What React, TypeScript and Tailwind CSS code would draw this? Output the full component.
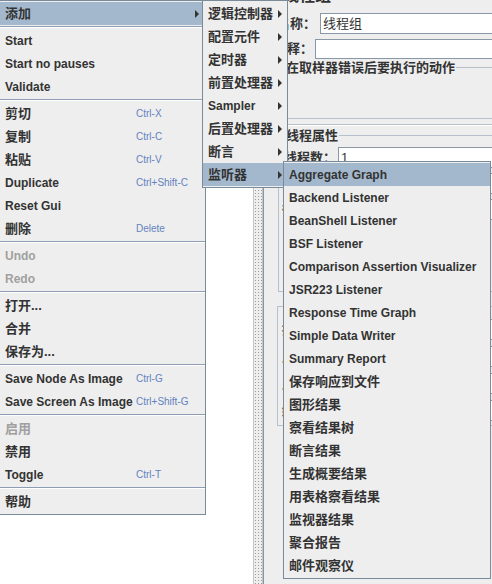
import React from 'react';
import clsx from 'clsx';

type Entry = { t: string; k?: string; arrow?: boolean; hl?: boolean; off?: boolean } | 'sep';

const CJK = /[\u4e00-\u9fff]/;

const mainItems: Entry[] = [
  { t: '添加', arrow: true, hl: true },
  'sep',
  { t: 'Start' },
  { t: 'Start no pauses' },
  { t: 'Validate' },
  'sep',
  { t: '剪切', k: 'Ctrl-X' },
  { t: '复制', k: 'Ctrl-C' },
  { t: '粘贴', k: 'Ctrl-V' },
  { t: 'Duplicate', k: 'Ctrl+Shift-C' },
  { t: 'Reset Gui' },
  { t: '删除', k: 'Delete' },
  'sep',
  { t: 'Undo', off: true },
  { t: 'Redo', off: true },
  'sep',
  { t: '打开...' },
  { t: '合并' },
  { t: '保存为...' },
  'sep',
  { t: 'Save Node As Image', k: 'Ctrl-G' },
  { t: 'Save Screen As Image', k: 'Ctrl+Shift-G' },
  'sep',
  { t: '启用', off: true },
  { t: '禁用' },
  { t: 'Toggle', k: 'Ctrl-T' },
  'sep',
  { t: '帮助' },
];

const addItems: Entry[] = [
  { t: '逻辑控制器', arrow: true },
  { t: '配置元件', arrow: true },
  { t: '定时器', arrow: true },
  { t: '前置处理器', arrow: true },
  { t: 'Sampler', arrow: true },
  { t: '后置处理器', arrow: true },
  { t: '断言', arrow: true },
  { t: '监听器', arrow: true, hl: true },
];

const listenerItems: Entry[] = [
  { t: 'Aggregate Graph', hl: true },
  { t: 'Backend Listener' },
  { t: 'BeanShell Listener' },
  { t: 'BSF Listener' },
  { t: 'Comparison Assertion Visualizer' },
  { t: 'JSR223 Listener' },
  { t: 'Response Time Graph' },
  { t: 'Simple Data Writer' },
  { t: 'Summary Report' },
  { t: '保存响应到文件' },
  { t: '图形结果' },
  { t: '察看结果树' },
  { t: '断言结果' },
  { t: '生成概要结果' },
  { t: '用表格察看结果' },
  { t: '监视器结果' },
  { t: '聚合报告' },
  { t: '邮件观察仪' },
];

const Arrow = () => (
  <span className="h-0 w-0 shrink-0 border-y-[4px] border-l-[4px] border-y-transparent border-l-[#333333]" />
);

const Separator = () => (
  <div className="flex h-[4px] flex-col justify-center">
    <div className="h-px bg-[#8d9db3]" />
    <div className="h-px bg-white" />
  </div>
);

interface PopupProps {
  items: Entry[];
  className: string;
  labelWidth?: string;
  arrowPad: string;
}

const Popup: React.FC<PopupProps> = ({ items, className, labelWidth, arrowPad }) => (
  <div className={clsx('absolute border border-[#7a8a99] bg-[#eeeeee] py-[1px]', className)}>
    {items.map((it, i) =>
      it === 'sep' ? (
        <Separator key={i} />
      ) : (
        <div
          key={i}
          className={clsx(
            'flex h-[23px] items-center pl-[5px] font-bold whitespace-nowrap',
            it.hl && 'bg-[#a3b8cc]',
            it.arrow && 'justify-between',
            it.arrow && arrowPad,
            it.off ? 'text-[#a0a0a0]' : 'text-[#333333]'
          )}
        >
          <span className={clsx('shrink-0', labelWidth, CJK.test(it.t) ? 'text-[13px]' : 'text-[12px]')}>{it.t}</span>
          {it.k && <span className="text-[10px] font-normal text-[#6382bf]">{it.k}</span>}
          {it.arrow && <Arrow />}
        </div>
      )
    )}
  </div>
);

const Field = ({ children, className }: { children?: React.ReactNode; className: string }) => (
  <div className={clsx('flex h-full flex-1 items-center border border-[#8a97a5] bg-white pl-[2px] text-[13px] font-normal', className)}>
    {children}
  </div>
);

export default function App() {
  return (
    <div className="relative flex h-[584px] w-[492px] overflow-hidden bg-white font-['Liberation_Sans','Noto_Sans_CJK_SC',sans-serif] text-[#333333]">
      {/* tree panel */}
      <div className="w-[253px] shrink-0 bg-white" />
      {/* splitter */}
      <div className="w-[10px] shrink-0 border-x border-[#c4c4c4] bg-[#eeeeee] bg-[image:radial-gradient(circle,#9c9c9c_0.7px,transparent_0.9px)] bg-[length:3px_3px]" />

      {/* thread group panel */}
      <div className="flex w-[260px] shrink-0 flex-col border-l border-[#8696a8] bg-[#eeeeee]">
        <div className="h-[13px] overflow-hidden pl-[19px]">
          <div className="-mt-[14px] text-[16px] leading-[20px] font-bold">线程组</div>
        </div>
        <div className="flex h-[21px] items-center">
          <div className="w-[52px] text-right text-[13px] font-bold">名称：</div>
          <Field className="ml-[4px]">线程组</Field>
        </div>
        <div className="mt-[5px] flex h-[20px] items-center">
          <div className="w-[49px] text-right text-[13px] font-bold">注释：</div>
          <Field className="ml-[2px]" />
        </div>

        <fieldset className="mt-[1px] ml-[14px] h-[59px] border border-[#b5c0cc] p-0">
          <legend className="ml-[6px] px-[1px] text-[13px] leading-[15px] font-bold">在取样器错误后要执行的动作</legend>
        </fieldset>
        <div className="mt-[5px] ml-[14px] h-[2px] border-t border-b border-t-[#b5c0cc] border-b-white" />

        <fieldset className="mt-[2px] ml-[14px] h-[164px] border border-[#b5c0cc] p-0">
          <legend className="ml-[6px] px-[1px] text-[13px] leading-[15px] font-bold">线程属性</legend>
          <div className="mt-[4px] flex h-[21px] items-center">
            <div className="w-[57px] text-right text-[13px] font-bold">线程数：</div>
            <Field className="ml-[2px]">1</Field>
          </div>
          <div className="mt-[5px] flex h-[21px] items-center pl-[60px]">
            <Field className="ml-[2px]">1</Field>
          </div>
          <div className="mt-[5px] flex h-[21px] items-center pl-[3px]">
            <div className="text-[13px] font-bold">循环次数</div>
            <Field className="ml-[40px]">1</Field>
          </div>
        </fieldset>

        <fieldset className="mt-[7px] ml-[13px] h-[127px] border border-[#b5c0cc] p-0">
          <legend className="ml-[6px] px-[1px] text-[13px] leading-[15px] font-bold">调度器配置</legend>
          <div className="mt-[5px] flex flex-col gap-[6px] pl-[4px]">
            {['持续时间（秒）', '启动延迟（秒）', '启动时间', '结束时间'].map((l) => (
              <div key={l} className="flex h-[21px] items-center">
                <div className="w-[100px] text-[13px] font-bold">{l}</div>
                <Field className="ml-[2px]" />
              </div>
            ))}
          </div>
        </fieldset>
      </div>

      {/* popup menus */}
      <Popup items={mainItems} className="top-0 left-[-1px] w-[207px]" labelWidth="w-[131px]" arrowPad="pr-[6px]" />
      <Popup items={addItems} className="top-0 left-[202px] w-[86px]" arrowPad="pr-[5px]" />
      <Popup items={listenerItems} className="top-[161px] left-[283px] w-[208px]" arrowPad="pr-[5px]" />
    </div>
  );
}
